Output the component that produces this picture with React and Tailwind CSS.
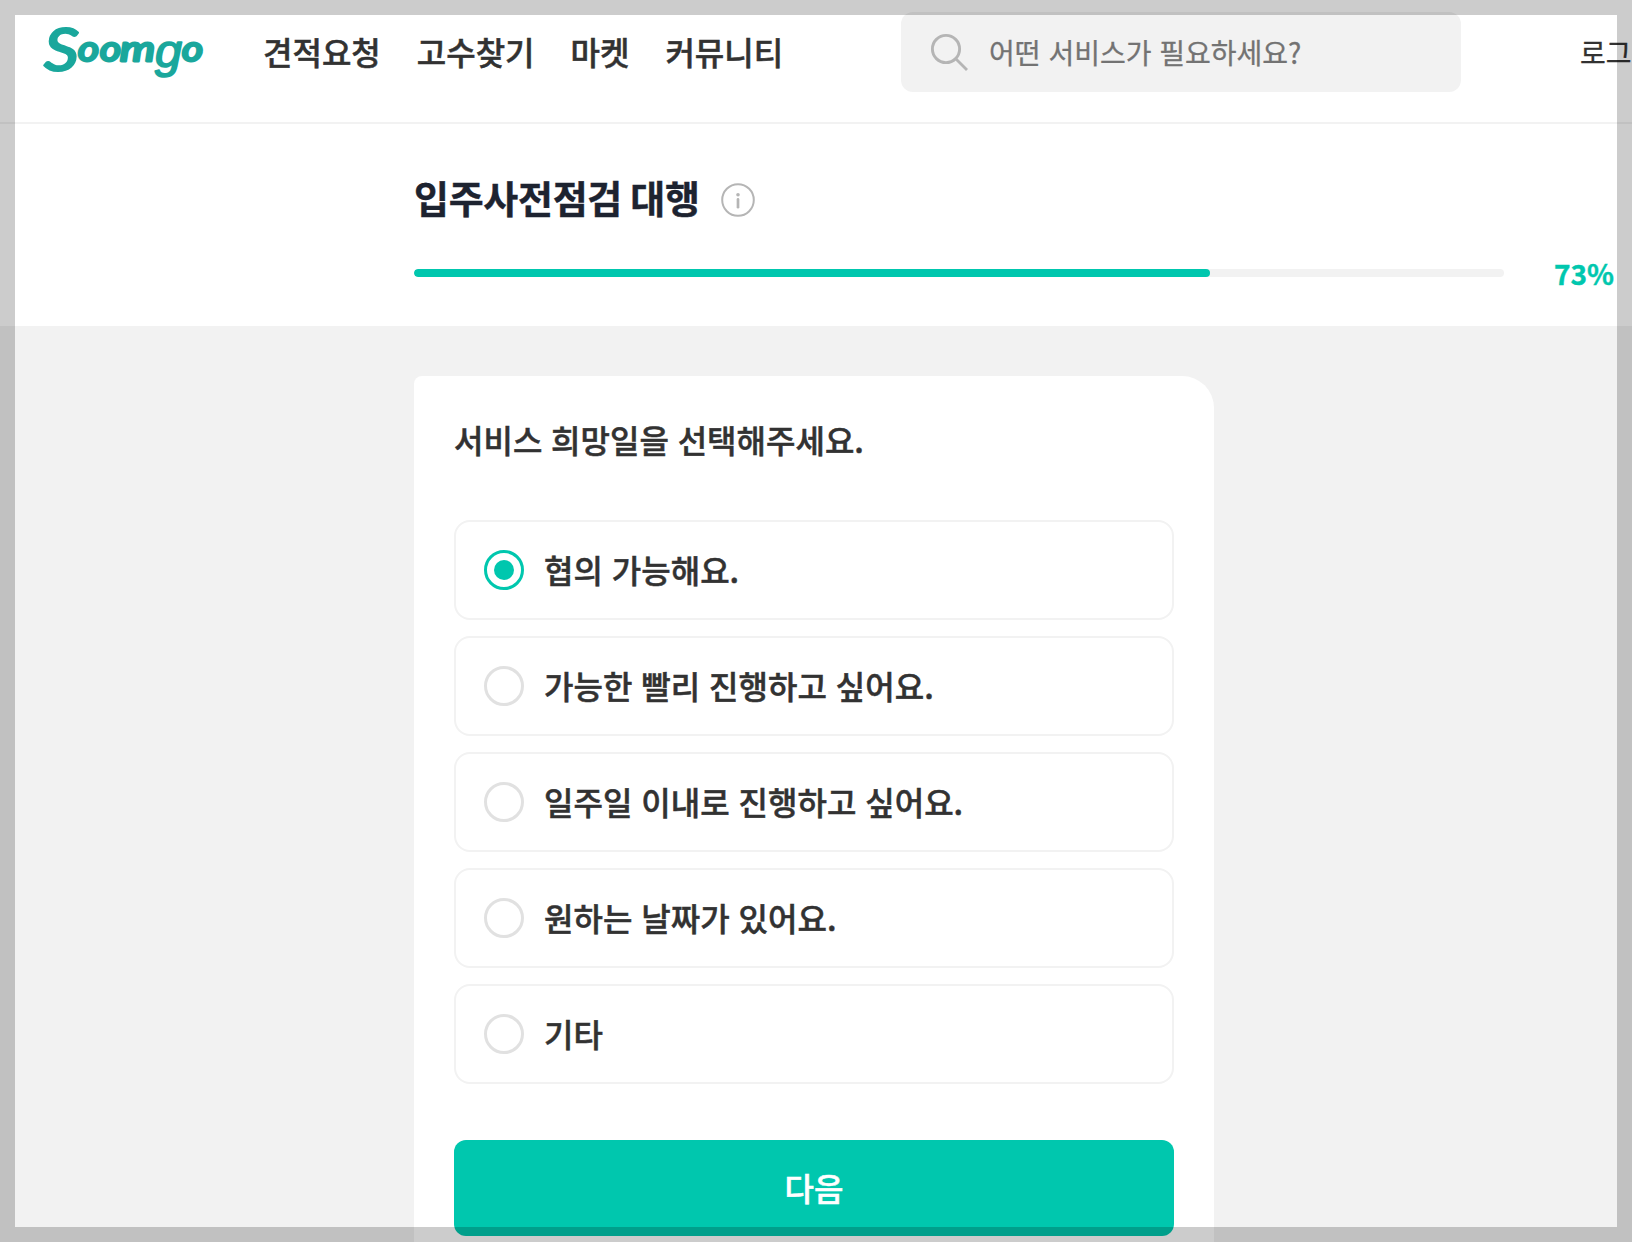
import { useState } from 'react';

const NAV_ITEMS = ['견적요청', '고수찾기', '마켓', '커뮤니티'];

const OPTIONS = [
  '협의 가능해요.',
  '가능한 빨리 진행하고 싶어요.',
  '일주일 이내로 진행하고 싶어요.',
  '원하는 날짜가 있어요.',
  '기타',
];

const PROGRESS = 73;

const Logo = () => (
  <svg
    viewBox="0 0 164 80"
    className="h-20 w-[164px] shrink-0 font-['Lato',sans-serif] italic"
    fill="#1aa79c"
    stroke="#1aa79c"
    strokeWidth="2.8"
    strokeLinejoin="round"
    aria-label="Soomgo"
  >
    <text x="1" y="59" fontSize="60" strokeWidth="2.2" textLength="35" lengthAdjust="spacingAndGlyphs">S</text>
    <text x="35" y="48.5" fontSize="35" textLength="21" lengthAdjust="spacingAndGlyphs">o</text>
    <text x="57" y="48.5" fontSize="35" textLength="21" lengthAdjust="spacingAndGlyphs">o</text>
    <text x="77" y="48.5" fontSize="35" textLength="35" lengthAdjust="spacingAndGlyphs">m</text>
    <text
      x="112"
      y="54.5"
      fontSize="47"
      strokeWidth="1.6"
      textLength="27"
      lengthAdjust="spacingAndGlyphs"
      className="font-['Liberation_Sans',sans-serif]"
    >
      g
    </text>
    <text x="139" y="48.5" fontSize="35" textLength="21" lengthAdjust="spacingAndGlyphs">o</text>
  </svg>
);

const SearchIcon = () => (
  <svg viewBox="0 0 40 40" className="size-10 shrink-0" fill="none" stroke="#b5b5b5" strokeWidth="2.9">
    <circle cx="17" cy="17" r="13.6" />
    <path d="M26.5 26.5 38 38" />
  </svg>
);

const InfoIcon = () => (
  <svg viewBox="0 0 34 34" className="size-[34px] shrink-0" fill="none" stroke="#b5b5b5">
    <circle cx="17" cy="17" r="15.8" strokeWidth="2" />
    <circle cx="17" cy="11.7" r="1.8" fill="#b5b5b5" stroke="none" />
    <path d="M17 16.4v7.8" strokeWidth="2.7" strokeLinecap="round" />
  </svg>
);

const Header = () => (
  <header className="flex h-[124px] shrink-0 items-start border-b-2 border-[#f2f2f2] bg-white pl-[43px] pt-3">
    <div className="flex h-20 items-center">
      <Logo />
      <nav className="ml-[56px] flex gap-9 pb-0.5 text-[32px] font-medium leading-[48px] [-webkit-text-stroke:0.5px]">
        {NAV_ITEMS.map((item) => (
          <a key={item} href="#" className="whitespace-nowrap">{item}</a>
        ))}
      </nav>
    </div>
    <div className="ml-auto flex h-20 w-[560px] shrink-0 items-center gap-5 rounded-xl bg-[#f2f2f2] pl-7">
      <SearchIcon />
      <span className="text-[28px] leading-10 text-[#737373] [-webkit-text-stroke:0.3px]">어떤 서비스가 필요하세요?</span>
    </div>
    <a
      href="#"
      className="ml-[119px] flex h-20 w-[52px] shrink-0 items-center whitespace-nowrap text-[28px] [-webkit-text-stroke:0.3px]"
    >
      로그인
    </a>
  </header>
);

const ProgressSection = () => (
  <section className="h-[202px] shrink-0 bg-white pl-[414px] pt-[46px]">
    <div className="flex h-[60px] items-center gap-[21px]">
      <h1 className="pb-1.5 text-[38px] font-bold leading-[60px] tracking-[-0.3px] text-[#1d2330] [-webkit-text-stroke:0.4px] [word-spacing:0]">
        입주사전점검 대행
      </h1>
      <InfoIcon />
    </div>
    <div className="mt-[23px] flex h-10 items-center">
      <div className="h-2 w-[1090px] overflow-hidden rounded-full bg-[#f2f2f2]">
        <div className="h-full rounded-full bg-[#00c7ae]" style={{ width: `${PROGRESS}%` }} />
      </div>
      <span className="ml-[50px] text-[28px] font-bold leading-10 text-[#00c7ae] [-webkit-text-stroke:0.4px]">
        {PROGRESS}%
      </span>
    </div>
  </section>
);

const Option = ({ label, checked, onSelect }) => (
  <button
    type="button"
    role="radio"
    aria-checked={checked}
    onClick={onSelect}
    className="flex h-[100px] w-full items-center gap-5 rounded-2xl border-2 border-[#f2f2f2] pl-7 text-left"
  >
    <span
      className={`flex size-10 items-center justify-center rounded-full border-3 ${
        checked ? 'border-[#00c7ae]' : 'border-[#e1e1e1]'
      }`}
    >
      {checked && <span className="size-5 rounded-full bg-[#00c7ae]" />}
    </span>
    <span className="pb-0.5 text-[32px] font-medium leading-[48px] [-webkit-text-stroke:0.5px] [word-spacing:1.76px]">
      {label}
    </span>
  </button>
);

const App = () => {
  const [selected, setSelected] = useState(0);

  return (
    <div className="relative flex h-[1242px] w-[1632px] flex-col overflow-hidden bg-[#f2f2f2] font-['Noto_Sans_CJK_KR',sans-serif] text-[#323232] [word-spacing:1.6px]">
      <Header />
      <ProgressSection />
      <main className="ml-[414px] mt-[50px] h-[900px] w-[800px] shrink-0 rounded-tl-lg rounded-tr-[32px] bg-white px-10 pt-10">
        <h2 className="-mt-px text-[32px] font-medium leading-[48px] [-webkit-text-stroke:0.5px]">
          서비스 희망일을 선택해주세요.
        </h2>
        <div role="radiogroup" className="mt-[57px] flex flex-col gap-4">
          {OPTIONS.map((label, i) => (
            <Option key={label} label={label} checked={i === selected} onSelect={() => setSelected(i)} />
          ))}
        </div>
        <button
          type="button"
          className="mt-14 h-24 w-full rounded-xl bg-[#00c7ae] pb-0.5 text-[32px] font-medium text-white [-webkit-text-stroke:0.5px]"
        >
          다음
        </button>
      </main>
      {/* translucent frame over the page edges */}
      <div className="pointer-events-none absolute inset-0 border-15 border-black/20" />
    </div>
  );
};

export default App;
